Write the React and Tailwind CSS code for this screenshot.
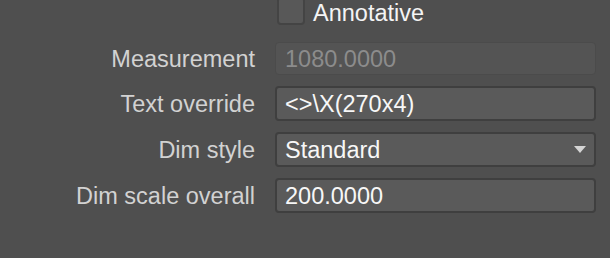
import React from 'react';

const rows = [
  { label: 'Measurement', value: '1080.0000', disabled: true },
  { label: 'Text override', value: '<>\\X(270x4)' },
  { label: 'Dim style', value: 'Standard', select: true },
  { label: 'Dim scale overall', value: '200.0000' },
];

const Field = ({ value, disabled, select }) => {
  if (disabled) {
    return (
      <div className="flex items-center w-[321px] h-[33px] px-[9px] rounded-[4px] border border-[#4b4b4b] bg-[#545454] text-[#8c8c8c]">
        {value}
      </div>
    );
  }
  return (
    <div className="flex items-center justify-between w-[321px] h-[35px] pl-[8px] pr-[8px] rounded-[4px] border-2 border-[#3f3f3f] bg-[#5a5a5a] text-[#f7f7f7]">
      <span>{value}</span>
      {select && (
        <svg width="12" height="8" viewBox="0 0 12 8">
          <path d="M0 0 L12 0 L6 7 Z" fill="#d4d4d4" />
        </svg>
      )}
    </div>
  );
};

export default function App() {
  return (
    <div
      className="w-[610px] h-[258px] overflow-hidden bg-[#4f4f4f] text-[23.5px] leading-[28px] text-[#d2d2d2]"
      style={{ fontFamily: '"Liberation Sans", Arial, sans-serif' }}
    >
      <div className="flex items-start ml-[277px] h-[27px] gap-[8px]">
        <div className="w-[28px] h-[28px] mt-[-3px] rounded-[4px] border-2 border-[#444444] bg-[#585858]" />
        <span className="text-[#f4f4f4] leading-[26px]">Annotative</span>
      </div>
      <div className="flex flex-col gap-[11px] mt-[15px]">
        {rows.map((r) => (
          <div key={r.label} className="flex items-center gap-[20px]">
            <div className="w-[255px] text-right">{r.label}</div>
            <Field {...r} />
          </div>
        ))}
      </div>
    </div>
  );
}
